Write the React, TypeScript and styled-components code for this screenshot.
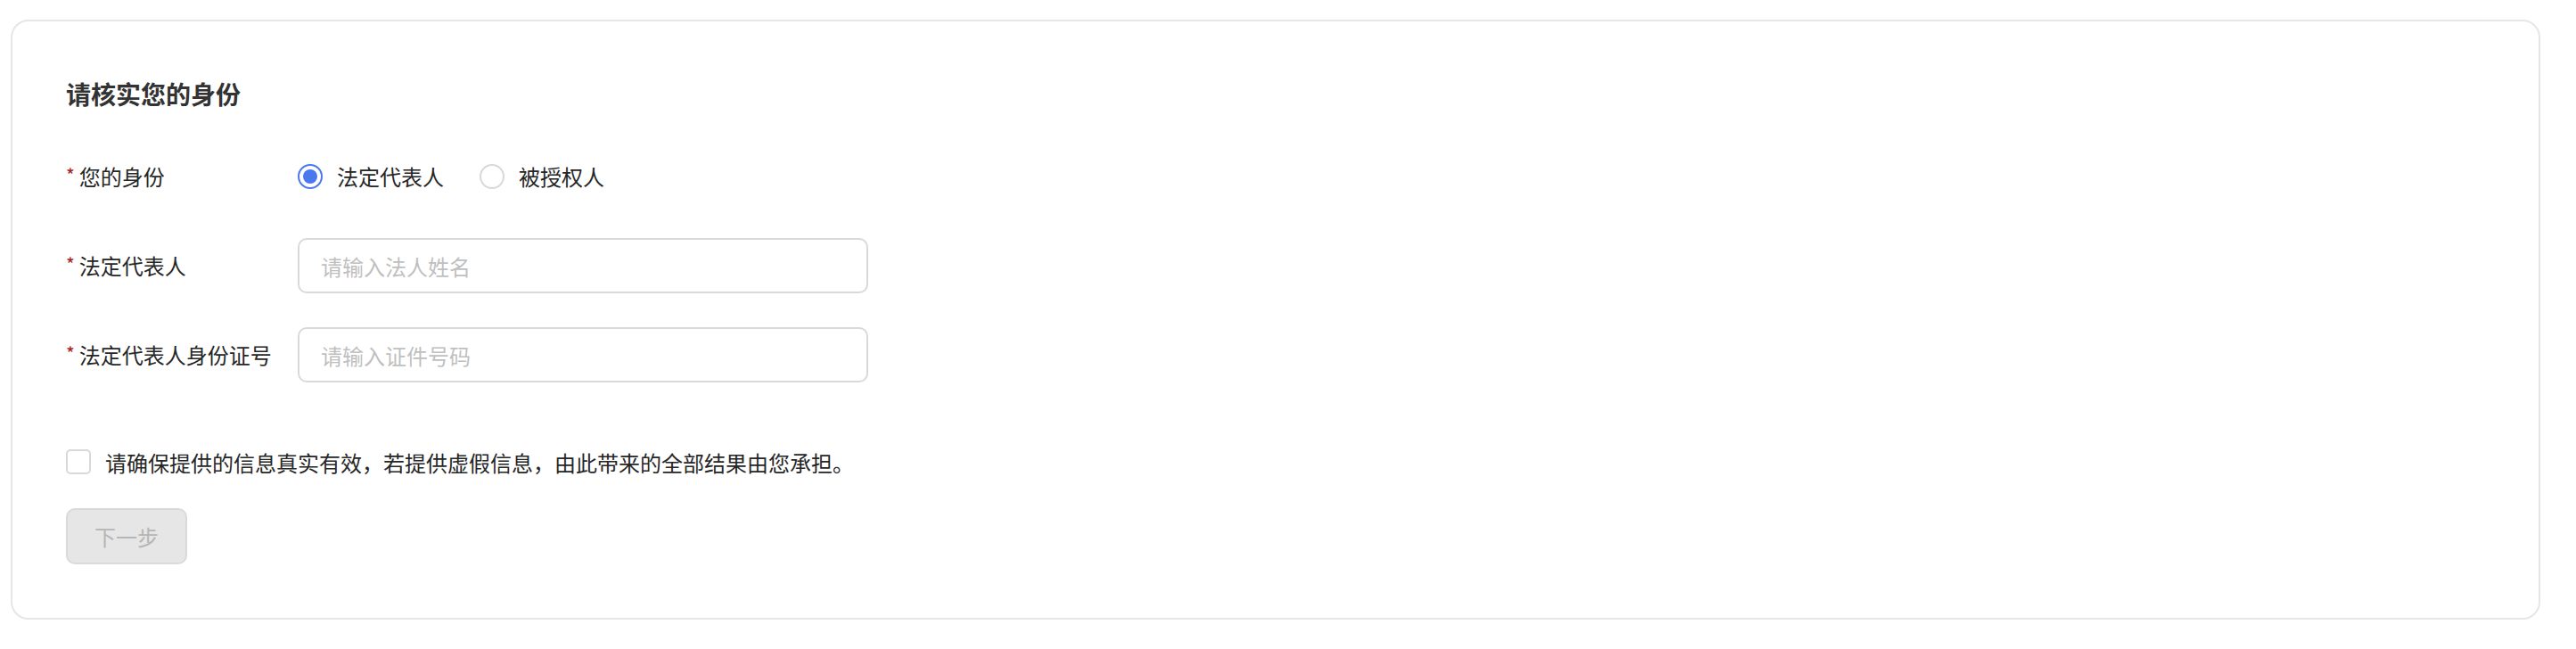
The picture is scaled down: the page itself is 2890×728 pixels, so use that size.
import React, { useState } from 'react';
import styled, { createGlobalStyle } from 'styled-components';

const GlobalStyle = createGlobalStyle`
  html, body {
    margin: 0;
    padding: 0;
    background: #fff;
  }
  body {
    font-family: "Noto Sans CJK SC", "Noto Sans", sans-serif;
    color: #262626;
  }
`;

const Card = styled.div`
  margin: 22px 40px 0 12px;
  border: 2px solid #e6e6e6;
  border-radius: 20px;
  padding: 61px 60px 60px 60px;
  background: #fff;
`;

const Title = styled.h2`
  margin: 0;
  font-size: 28px;
  line-height: 40px;
  font-weight: 700;
  color: #333;
`;

const Form = styled.div`
  display: flex;
  flex-direction: column;
  gap: 38px;
  margin-top: 42px;
`;

const Row = styled.div`
  display: flex;
  align-items: center;
  height: 62px;
`;

const Label = styled.div`
  width: 260px;
  flex-shrink: 0;
  display: flex;
  align-items: center;
  font-size: 24px;
  line-height: 34px;
  color: #262626;
`;

const Star = styled.span`
  color: #a8201a;
  font-size: 21px;
  line-height: 21px;
  margin-right: 5px;
  align-self: flex-start;
  margin-top: 5px;
`;

const RadioGroup = styled.div`
  display: flex;
  align-items: center;
  gap: 40px;
`;

const RadioOption = styled.label`
  display: flex;
  align-items: center;
  gap: 16px;
  font-size: 24px;
  line-height: 34px;
  color: #262626;
  cursor: pointer;
`;

const RadioCircle = styled.span<{ $checked: boolean }>`
  box-sizing: border-box;
  width: 28px;
  height: 28px;
  border-radius: 50%;
  border: 2px solid ${p => (p.$checked ? '#4a78ee' : '#d9d9d9')};
  display: flex;
  align-items: center;
  justify-content: center;
  &::after {
    content: '';
    width: 16px;
    height: 16px;
    border-radius: 50%;
    background: ${p => (p.$checked ? '#4a78ee' : 'transparent')};
  }
`;

const TextInput = styled.input`
  box-sizing: border-box;
  width: 640px;
  height: 62px;
  border: 2px solid #d9d9d9;
  border-radius: 10px;
  padding: 0 24px;
  font-family: inherit;
  font-size: 24px;
  color: #262626;
  outline: none;
  &::placeholder {
    color: #bfbfbf;
  }
`;

const AgreeRow = styled.label`
  display: flex;
  align-items: center;
  gap: 16px;
  height: 40px;
  margin-top: 69px;
  font-size: 24px;
  color: #262626;
  cursor: pointer;
`;

const CheckBox = styled.span<{ $checked: boolean }>`
  box-sizing: border-box;
  width: 28px;
  height: 28px;
  border: 2px solid ${p => (p.$checked ? '#4a78ee' : '#d9d9d9')};
  background: ${p => (p.$checked ? '#4a78ee' : '#fff')};
  border-radius: 5px;
`;

const NextButton = styled.button`
  box-sizing: border-box;
  display: block;
  margin-top: 32px;
  width: 136px;
  height: 63px;
  border: 2px solid #dadada;
  border-radius: 10px;
  background: #e6e6e6;
  color: #b5b5b5;
  font-family: inherit;
  font-size: 24px;
  cursor: not-allowed;
`;

export default function App() {
  const [role, setRole] = useState<'legal' | 'agent'>('legal');
  const [agreed, setAgreed] = useState(false);

  return (
    <>
      <GlobalStyle />
      <Card>
        <Title>请核实您的身份</Title>
        <Form>
          <Row>
            <Label><Star>*</Star>您的身份</Label>
            <RadioGroup>
              <RadioOption onClick={() => setRole('legal')}>
                <RadioCircle $checked={role === 'legal'} />
                法定代表人
              </RadioOption>
              <RadioOption onClick={() => setRole('agent')}>
                <RadioCircle $checked={role === 'agent'} />
                被授权人
              </RadioOption>
            </RadioGroup>
          </Row>
          <Row>
            <Label><Star>*</Star>法定代表人</Label>
            <TextInput placeholder="请输入法人姓名" />
          </Row>
          <Row>
            <Label><Star>*</Star>法定代表人身份证号</Label>
            <TextInput placeholder="请输入证件号码" />
          </Row>
        </Form>
        <AgreeRow onClick={() => setAgreed(!agreed)}>
          <CheckBox $checked={agreed} />
          请确保提供的信息真实有效，若提供虚假信息，由此带来的全部结果由您承担。
        </AgreeRow>
        <NextButton disabled={!agreed}>下一步</NextButton>
      </Card>
    </>
  );
}
